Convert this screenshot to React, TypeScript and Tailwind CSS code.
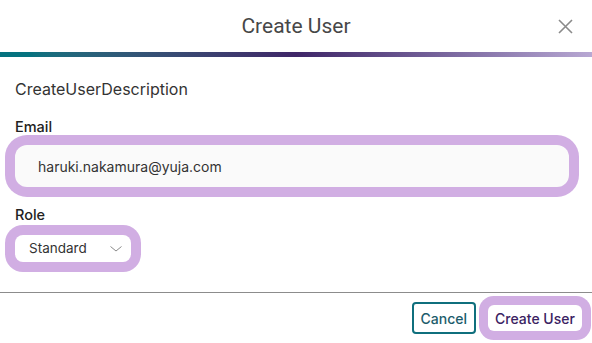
export default function App() {
  return (
    <div className="w-[592px] h-[343px] bg-white overflow-hidden flex flex-col font-['Inter',sans-serif] text-[#333]">
      <div className="h-[52px] shrink-0 grid grid-cols-[1fr_auto_1fr] items-center">
        <div />
        <h1 className="font-['Roboto',sans-serif] text-[21px] leading-[24px] text-[#474747]">Create User</h1>
        <div className="justify-self-end pr-[19px] flex items-center">
          <svg width="15" height="15" viewBox="0 0 15 15" fill="none">
            <path d="M1 1L14 14M14 1L1 14" stroke="#8a8a8a" strokeWidth="1.6" />
          </svg>
        </div>
      </div>
      <div className="h-[5px] shrink-0 bg-linear-to-r from-[#05727f] from-5% via-[#3f2668] via-50% to-[#b8a8d3]" />
      <div className="h-[235px] shrink-0 px-[15px] pt-[22px] flex flex-col">
        <p className="text-[16px] leading-[20px] text-[#333]">CreateUserDescription</p>
        <label className="mt-[18px] text-[14.5px] leading-[20px] font-medium text-[#222]">Email</label>
        <div className="mt-[8px] h-[42px] w-[554px] rounded-[12px] bg-[#fafafa] shadow-[0_0_0_10px_#d1aee3] pl-[23px] flex items-center text-[14px] text-[#333]">
          haruki.nakamura@yuja.com
        </div>
        <label className="mt-[18px] text-[14.5px] leading-[20px] font-medium text-[#222]">Role</label>
        <div className="mt-[10px] h-[27px] w-[116px] rounded-[8px] bg-white shadow-[0_0_0_10px_#d1aee3] pl-[14px] pr-[9px] flex items-center justify-between text-[13.5px] text-[#333]">
          <span>Standard</span>
          <svg width="12" height="6" viewBox="0 0 12 6" fill="none">
            <path d="M0.5 0.5L6 5L11.5 0.5" stroke="#8a8a8a" strokeWidth="1" />
          </svg>
        </div>
      </div>
      <div className="h-px shrink-0 bg-[#8c8c8c]" />
      <div className="h-[50px] shrink-0 flex items-center justify-end gap-[12px] pr-[10px]">
        <button className="h-[32px] px-[7px] border-2 border-[#0f6f7d] rounded-[4px] text-[14px] font-medium text-[#1c5c6b] bg-white">
          Cancel
        </button>
        <button className="h-[26px] w-[94px] rounded-[6px] bg-white shadow-[0_0_0_9px_#d1aee3] text-[14px] font-medium text-[#3a2262]">
          Create User
        </button>
      </div>
    </div>
  );
}
